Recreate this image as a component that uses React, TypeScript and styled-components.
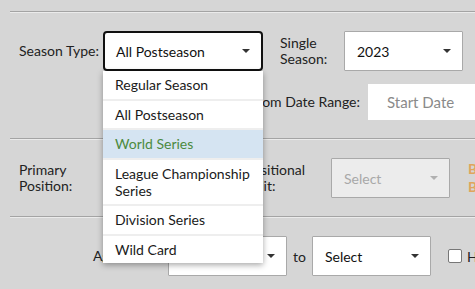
import styled, { createGlobalStyle } from "styled-components";

const GlobalStyle = createGlobalStyle`
  body {
    margin: 0;
    background: #d6d6d6;
    font-family: Lato, "Open Sans", sans-serif;
    font-size: 14px;
    color: #222;
    overflow: hidden;
  }
`;

const Page = styled.div`
  width: 475px;
  height: 289px;
  padding: 11px 0 0 10px;
  box-sizing: border-box;
  overflow: hidden;
`;

const Divider = styled.div`
  border-top: 1px solid #a4a4a4;
  border-bottom: 1px solid #ebebeb;
`;

const Section = styled.div`
  display: flex;
  flex-direction: column;
  gap: 13px;
  padding: 18px 0 18px 9px;
`;

const Row = styled.div`
  display: flex;
  align-items: center;
  white-space: nowrap;
`;

const Label = styled.div<{ $width?: number; $right?: boolean; $gap?: number; $nowrap?: boolean }>`
  flex: none;
  width: ${(p) => (p.$width ? `${p.$width}px` : "auto")};
  margin-left: ${(p) => p.$gap ?? 0}px;
  margin-right: 6px;
  text-align: ${(p) => (p.$right ? "right" : "left")};
  line-height: 16px;
  white-space: ${(p) => (p.$nowrap ? "nowrap" : "normal")};
`;

const SelectWrap = styled.div`
  position: relative;
  flex: none;
`;

const Select = styled.div<{ $width: number; $focused?: boolean; $disabled?: boolean }>`
  position: relative;
  flex: none;
  box-sizing: border-box;
  width: ${(p) => p.$width}px;
  height: 40px;
  display: flex;
  align-items: center;
  padding-left: ${(p) => (p.$focused ? 11 : 12)}px;
  background: ${(p) => (p.$disabled ? "#ececec" : "#fff")};
  color: ${(p) => (p.$disabled ? "#a8a8a8" : "#111")};
  border: ${(p) => (p.$focused ? "2px solid #111" : "1px solid #a9a9a9")};
  border-radius: ${(p) => (p.$focused ? 4 : 1)}px;

  &::after {
    content: "";
    position: absolute;
    right: 11px;
    top: 50%;
    margin-top: -2px;
    border-left: 4px solid transparent;
    border-right: 4px solid transparent;
    border-top: 4px solid ${(p) => (p.$disabled ? "#b0b0b0" : "#333")};
  }
`;

const Menu = styled.ul`
  position: absolute;
  top: 100%;
  left: 0;
  width: 160px;
  margin: 0;
  padding: 0;
  list-style: none;
  background: #eeeeee;
  box-shadow: 0 2px 6px rgba(0, 0, 0, 0.35);
  z-index: 5;
`;

const MenuItem = styled.li<{ $active?: boolean }>`
  padding: 5px 12px 5.5px;
  line-height: 17px;
  white-space: normal;
  background: ${(p) => (p.$active ? "#d5e4f2" : "#fff")};
  color: ${(p) => (p.$active ? "#4c8a3e" : "#1a1a1a")};

  & + & {
    margin-top: 2px;
  }
`;

const DateInput = styled.div`
  flex: none;
  box-sizing: border-box;
  width: 120px;
  height: 36px;
  margin-left: 2px;
  padding-left: 19px;
  display: flex;
  align-items: center;
  background: #fff;
  color: #8a8a8a;
  font-size: 15px;
`;

const Orange = styled.div`
  flex: none;
  margin-left: 18px;
  color: #e0a55c;
  line-height: 18px;
  font-weight: 700;
  white-space: normal;
`;

const Word = styled.span<{ $gap: number }>`
  flex: none;
  margin: 0 ${(p) => p.$gap}px;
`;

const Checkbox = styled.span`
  flex: none;
  width: 12px;
  height: 12px;
  margin-left: 17px;
  border: 1px solid #777;
  border-radius: 2px;
  background: #fff;
`;

const seasonTypes = [
  "Regular Season",
  "All Postseason",
  "World Series",
  "League Championship Series",
  "Division Series",
  "Wild Card",
];

export default function App() {
  return (
    <Page>
      <GlobalStyle />
      <Divider />
      <Section>
        <Row>
          <Label $width={78} $nowrap>
            Season Type:
          </Label>
          <SelectWrap>
            <Select $width={160} $focused>
              All Postseason
            </Select>
            <Menu>
              {seasonTypes.map((t) => (
                <MenuItem key={t} $active={t === "World Series"}>
                  {t}
                </MenuItem>
              ))}
            </Menu>
          </SelectWrap>
          <Label $width={58} $gap={17}>
            Single Season:
          </Label>
          <Select $width={119}>2023</Select>
        </Row>
        <Row>
          <Label $width={341} $right>
            From Date Range:
          </Label>
          <DateInput>Start Date</DateInput>
        </Row>
      </Section>
      <Divider />
      <Section>
        <Row>
          <Label $width={78}>Primary Position:</Label>
          <Select $width={120}>Select</Select>
          <Label $width={80} $gap={22}>
            Positional Split:
          </Label>
          <Select $width={119} $disabled>
            Select
          </Select>
          <Orange>
            Bats
            <br />
            Both
          </Orange>
        </Row>
      </Section>
      <Divider />
      <Section>
        <Row>
          <Label $width={143} $right>
            Age Range:
          </Label>
          <Select $width={119}>Select</Select>
          <Word $gap={6}>to</Word>
          <Select $width={119}>Select</Select>
          <Checkbox />
          <Word $gap={5}>Hide</Word>
        </Row>
      </Section>
    </Page>
  );
}
